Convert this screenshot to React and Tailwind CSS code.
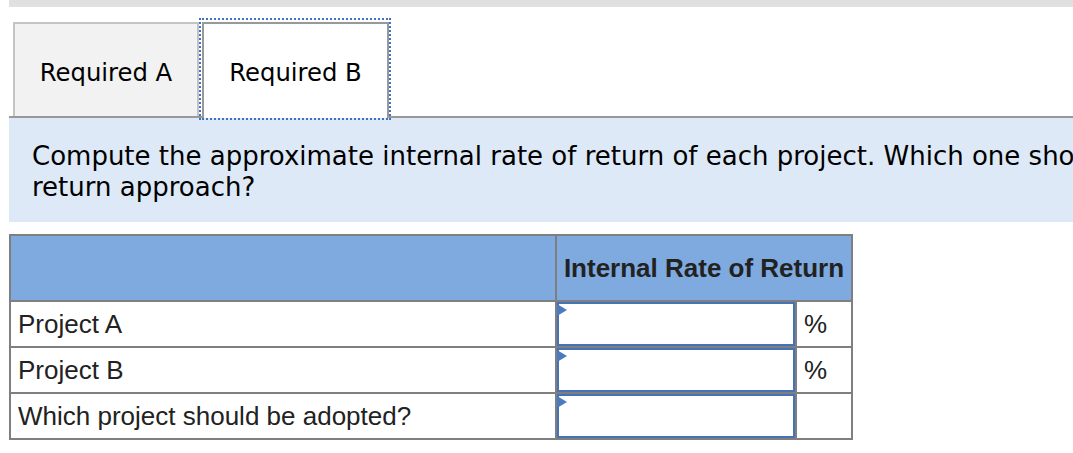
import React from "react";

const rows = [
  { label: "Project A", unit: "%" },
  { label: "Project B", unit: "%" },
  { label: "Which project should be adopted?", unit: "" },
];

// blue marker in the corner of an answer box
const Marker = () => (
  <svg className="absolute left-0 top-[2px]" width="10" height="12" viewBox="0 0 10 12">
    <polygon points="0,0 10,6 0,12" fill="#4a7bc0" />
  </svg>
);

export default function App() {
  return (
    <div className="w-[1073px] h-[453px] bg-white overflow-hidden">
      <div className="ml-[9px] h-[7px] bg-[#e0e0e0]" />

      {/* tabs */}
      <div className="ml-[9px] mt-[15px] flex border-b-2 border-[#999999] pl-[4px] w-[1300px]">
        <div
          className="w-[186px] h-[94px] border-2 border-b-0 border-[#c4c4c4] bg-[#f2f2f2] flex items-center justify-center pt-[7px] text-[24.3px] text-black"
          style={{ fontFamily: "'DejaVu Sans', Verdana, sans-serif" }}
        >
          Required A
        </div>
        <div
          className="relative ml-[3px] w-[187px] h-[96px] -mb-[2px] border-2 border-b-0 border-[#999999] bg-white flex items-center justify-center pt-[5px] text-[24.3px] text-black"
          style={{ fontFamily: "'DejaVu Sans', Verdana, sans-serif" }}
        >
          Required B
          {/* focus ring */}
          <div className="absolute left-[-5px] right-[-4px] top-[-6px] bottom-[-2px] border-2 border-dotted border-[#4072bd] pointer-events-none" />
        </div>
      </div>

      {/* instructions */}
      <div
        className="ml-[9px] w-[1500px] bg-[#dde9f7] pl-[23px] pt-[23px] pb-[19px] text-[26px] leading-[31px] text-black whitespace-nowrap"
        style={{ fontFamily: "'DejaVu Sans', Verdana, sans-serif" }}
      >
        Compute the approximate internal rate of return of each project. Which one should be adopted based on the internal rate of
        <br />
        return approach?
      </div>

      {/* answer table */}
      <div
        className="ml-[9px] mt-[12px] w-[844px] border-2 border-[#7f7f7f] text-[26px] text-[#222222]"
        style={{ fontFamily: "'Liberation Sans', Arial, sans-serif" }}
      >
        <div className="flex h-[64px] bg-[#7faadf]">
          <div className="w-[544px]" />
          <div className="w-[296px] border-l-2 border-[#7f7f7f] flex items-center justify-center font-bold">
            Internal Rate of Return
          </div>
        </div>
        {rows.map((r) => (
          <div key={r.label} className="flex h-[46px] border-t-2 border-[#7f7f7f]">
            <div className="w-[544px] pl-[7px] flex items-center">{r.label}</div>
            <div className="w-[240px] border-l-2 border-[#7f7f7f] relative">
              <div className="w-full h-full border-2 border-[#4672b6] bg-white" />
              <Marker />
            </div>
            <div className="w-[56px] border-l-2 border-[#7f7f7f] pl-[7px] flex items-center">{r.unit}</div>
          </div>
        ))}
      </div>
    </div>
  );
}
